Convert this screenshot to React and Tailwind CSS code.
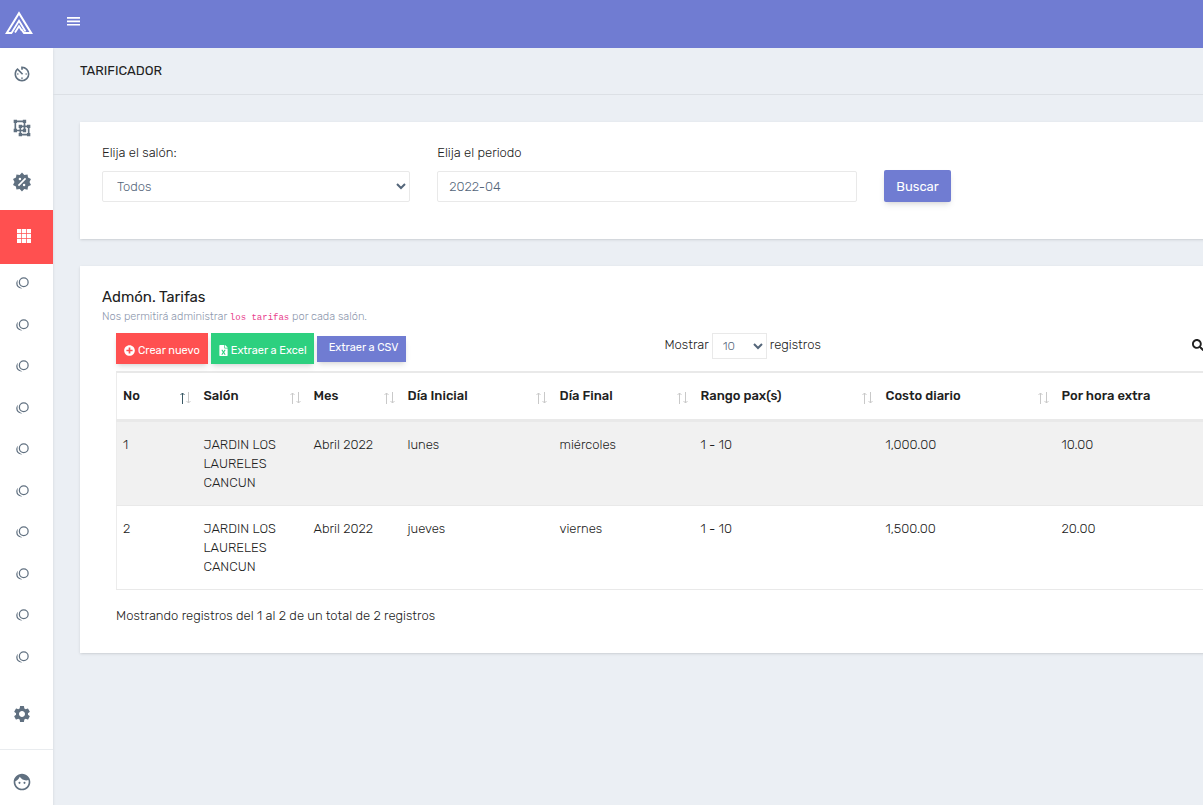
import React, { useState } from 'react';
import { MdAvTimer, MdFace, MdSettings } from 'react-icons/md';
import { FaFileExcel, FaPlusCircle, FaSearch } from 'react-icons/fa';

const rates = [
  { id: 1, room: 'JARDIN LOS LAURELES CANCUN', month: 'Abril 2022', from: 'lunes', to: 'miércoles', pax: '1 - 10', daily: '1,000.00', extra: '10.00' },
  { id: 2, room: 'JARDIN LOS LAURELES CANCUN', month: 'Abril 2022', from: 'jueves', to: 'viernes', pax: '1 - 10', daily: '1,500.00', extra: '20.00' },
];

const columns = [
  { label: 'No', width: 'w-[81px]' },
  { label: 'Salón', width: 'w-[110px]' },
  { label: 'Mes', width: 'w-[94px]' },
  { label: 'Día Inicial', width: 'w-[152px]' },
  { label: 'Día Final', width: 'w-[141px]' },
  { label: 'Rango pax(s)', width: 'w-[185px]' },
  { label: 'Costo diario', width: 'w-[176px]' },
  { label: 'Por hora extra', width: '' },
];

const submenu = ['Salones', 'Paquetes', 'Menús', 'Servicios', 'Clientes', 'Eventos', 'Periodos', 'Tarifas', 'Extras', 'Reportes'];

function Logo() {
  return (
    <svg viewBox="0 0 28 24" className="h-6 w-7" fill="none" stroke="#fff" strokeWidth="2">
      <path d="M7 22H1.8L14 2.2 26.2 22H19l-2.5-3.5" />
      <path d="M6.5 22 14 9.8 20.5 20.5" strokeWidth="1.8" />
      <path d="M10 21.5 14 15.2l2.8 4.3" strokeWidth="1.8" />
    </svg>
  );
}

function MenuIcon() {
  return (
    <svg viewBox="0 0 13 9" className="h-[9px] w-[13px]" fill="currentColor">
      <path d="M0 0h13v1.7H0zM0 3.4h13v1.8H0zM0 6.9h13v1.7H0z" />
    </svg>
  );
}

function UngroupIcon() {
  return (
    <svg viewBox="0 0 24 24" className="size-5" fill="currentColor">
      <path d="M2,2H6V3H13V2H17V6H16V9H18V8H22V12H21V18H22V22H18V21H12V22H8V18H9V16H6V17H2V13H3V6H2V2M18,12V11H16V13H17V17H13V16H11V18H12V19H18V18H19V12H18M13,6V5H6V6H5V13H6V14H9V12H8V8H12V9H14V6H13M12,12H11V14H13V13H14V11H12V12Z" />
    </svg>
  );
}

function SaleIcon() {
  return (
    <svg viewBox="0 0 24 24" className="size-5" fill="currentColor">
      <path d="M18.65,2.85L19.26,6.71L22.77,8.5L21,12L22.78,15.5L19.24,17.29L18.63,21.15L14.74,20.54L11.97,23.3L9.19,20.5L5.33,21.14L4.71,17.25L1.22,15.47L3,11.97L1.23,8.5L4.74,6.69L5.35,2.86L9.22,3.5L12,0.69L14.77,3.46L18.65,2.85M9.5,7A1.5,1.5 0 0,0 8,8.5A1.5,1.5 0 0,0 9.5,10A1.5,1.5 0 0,0 11,8.5A1.5,1.5 0 0,0 9.5,7M14.5,14A1.5,1.5 0 0,0 13,15.5A1.5,1.5 0 0,0 14.5,17A1.5,1.5 0 0,0 16,15.5A1.5,1.5 0 0,0 14.5,14M8.41,17L17,8.41L15.59,7L7,15.59L8.41,17Z" />
    </svg>
  );
}

function GridIcon() {
  return (
    <svg viewBox="0 0 14 14" className="size-3.5" fill="currentColor">
      <path d="M0 0h4.2v4.2H0zM4.9 0h4.2v4.2H4.9zM9.8 0H14v4.2H9.8zM0 4.9h4.2v4.2H0zM4.9 4.9h4.2v4.2H4.9zM9.8 4.9H14v4.2H9.8zM0 9.8h4.2V14H0zM4.9 9.8h4.2V14H4.9zM9.8 9.8H14V14H9.8z" />
    </svg>
  );
}

function CirclesIcon() {
  return (
    <svg viewBox="0 0 24 24" className="size-[15px]" fill="currentColor">
      <path d="M14,2A8,8 0 0,0 6,10A8,8 0 0,0 14,18A8,8 0 0,0 22,10A8,8 0 0,0 14,2M14,4A6,6 0 0,1 20,10A6,6 0 0,1 14,16A6,6 0 0,1 8,10A6,6 0 0,1 14,4M4.93,5.82C3.08,7.34 2,9.61 2,12A8,8 0 0,0 10,20C10.64,20 11.27,19.92 11.88,19.77C10.12,19.38 8.5,18.5 7.17,17.29C5.22,16.25 4,14.21 4,12C4,11.7 4.03,11.41 4.07,11.11C4.03,10.74 4,10.37 4,10C4,8.56 4.32,7.13 4.93,5.82Z" />
    </svg>
  );
}

function SortArrows({ active }) {
  return (
    <svg viewBox="0 0 12 12" className="h-3 w-3" fill="none" stroke="#c9c9c9">
      <path d="M2.5 1v11M.5 3l2-2 2 2" stroke={active ? '#3b5a66' : '#c9c9c9'} />
      <path d="M8.5 0v11M6.5 9l2 2 2-2" />
    </svg>
  );
}

function SideLink({ label, active, children }) {
  return (
    <a
      href="#"
      aria-label={label}
      className={`flex h-[54px] items-center pb-0.5 ${active ? 'bg-[#ff5050] pl-[17px] text-white' : 'pl-3 text-[#607080]'}`}
    >
      {children}
    </a>
  );
}

function Sidebar() {
  return (
    <nav className="w-[53px] shrink-0 bg-white shadow-sm">
      <SideLink label="Dashboard">
        <MdAvTimer className="size-5" />
      </SideLink>
      <SideLink label="Grupos">
        <UngroupIcon />
      </SideLink>
      <SideLink label="Promociones">
        <SaleIcon />
      </SideLink>
      <SideLink label="Catálogos" active>
        <GridIcon />
      </SideLink>
      <ul className="flex h-[424px] flex-col justify-between pt-3 pb-[23px] text-[#607080]">
        {submenu.map((item) => (
          <li key={item}>
            <a href="#" aria-label={item} className="block pl-[15px]">
              <CirclesIcon />
            </a>
          </li>
        ))}
      </ul>
      <SideLink label="Configuración">
        <MdSettings className="size-5" />
      </SideLink>
      <div className="mt-[7px] border-t border-[#e9ecef] pt-1.5">
        <SideLink label="Perfil">
          <MdFace className="size-5" />
        </SideLink>
      </div>
    </nav>
  );
}

function SearchCard() {
  const [period, setPeriod] = useState('2022-04');

  return (
    <section className="grid grid-cols-12 items-end gap-[27px] bg-white px-[22px] pt-[21px] pb-[37px] shadow-sm">
      <div className="col-span-3">
        <label htmlFor="salon" className="mb-[9px] block">
          Elija el salón:
        </label>
        <select id="salon" className="block h-[31px] w-full rounded-xs border border-[#e9e9e9] pl-2.5 text-[#54667a]">
          <option>Todos</option>
        </select>
      </div>
      <div className="col-span-4">
        <label htmlFor="periodo" className="mb-[9px] block">
          Elija el periodo
        </label>
        <input
          id="periodo"
          type="text"
          value={period}
          onChange={(e) => setPeriod(e.target.value)}
          className="block h-[31px] w-full rounded-xs border border-[#e9e9e9] px-[11px] text-[#54667a]"
        />
      </div>
      <div className="col-span-5">
        <button type="button" className="block h-8 rounded-xs bg-[#707cd2] px-3 font-normal text-white shadow-md">
          Buscar
        </button>
      </div>
    </section>
  );
}

function Toolbar() {
  return (
    <div className="grid grid-cols-[548fr_527fr_210fr] pt-[5px]">
      <div className="flex gap-[3px] text-[11px] font-normal text-white">
        <button type="button" className="flex h-[31px] items-center gap-[3px] bg-[#ff5050] px-2 pt-[3px] shadow-md">
          <FaPlusCircle className="size-[11px]" />
          Crear nuevo
        </button>
        <button type="button" className="flex h-[31px] items-center gap-0.5 bg-[#2dd07f] px-[7px] pt-[3px] shadow-md">
          <FaFileExcel className="size-[11px]" />
          Extraer a Excel
        </button>
        <button type="button" className="mt-[3px] h-[26px] bg-[#707cd2] pr-2 pb-1 pl-3 shadow-md">
          Extraer a CSV
        </button>
      </div>
      <div className="flex items-start gap-[3px]">
        <label htmlFor="longitud" className="leading-6">
          Mostrar
        </label>
        <select id="longitud" className="h-[26px] w-[55px] border border-[#e9e9e9] pl-1.5 text-xs text-[#54667a]">
          <option>10</option>
          <option>25</option>
          <option>50</option>
        </select>
        <span className="leading-6">registros</span>
      </div>
      <div className="flex items-start gap-2">
        <label htmlFor="buscar" className="pt-1.5">
          <FaSearch className="size-3" />
        </label>
        <input id="buscar" type="search" aria-label="Buscar" className="h-[26px] w-full border border-[#e9e9e9] px-2" />
      </div>
    </div>
  );
}

function RatesTable() {
  return (
    <table className="mt-[7px] w-full table-fixed border-collapse border border-[#ececec] text-left">
      <thead>
        <tr className="border-t-2 border-b-3 border-[#e9e9e9]">
          {columns.map((col, i) => (
            <th key={col.label} className={`h-12 px-1.5 font-medium ${col.width}`}>
              <div className="flex items-center justify-between">
                {col.label}
                <span className="pt-1">
                  <SortArrows active={i === 0} />
                </span>
              </div>
            </th>
          ))}
        </tr>
      </thead>
      <tbody>
        {rates.map((rate) => (
          <tr key={rate.id} className="border-b border-[#e9e9e9] align-top leading-[19px] odd:bg-[#f1f1f1]">
            <td className="px-1.5 py-[13px]">{rate.id}</td>
            <td className="px-1.5 py-[13px]">{rate.room}</td>
            <td className="px-1.5 py-[13px]">{rate.month}</td>
            <td className="px-1.5 py-[13px]">{rate.from}</td>
            <td className="px-1.5 py-[13px]">{rate.to}</td>
            <td className="px-1.5 py-[13px]">{rate.pax}</td>
            <td className="px-1.5 py-[13px]">{rate.daily}</td>
            <td className="px-1.5 py-[13px]">{rate.extra}</td>
          </tr>
        ))}
      </tbody>
    </table>
  );
}

export default function App() {
  return (
    <div className="flex min-h-screen flex-col overflow-hidden bg-[#ebeff4] font-[Rubik,Roboto,sans-serif] text-[13px] leading-[19px] font-light text-[#212121]">
      <header className="flex h-12 items-center bg-[#707cd2] text-white">
        <a href="#" aria-label="Inicio" className="flex h-full w-[53px] items-center pb-0.5 pl-[5px]">
          <Logo />
        </a>
        <button type="button" aria-label="Menú" className="pb-1.5 pl-3.5">
          <MenuIcon />
        </button>
      </header>
      <div className="flex grow">
        <Sidebar />
        <main className="min-w-[1412px] grow">
          <div className="border-b border-[#dce0e5] px-[27px] py-[13px]">
            <h1 className="leading-5 font-normal">TARIFICADOR</h1>
          </div>
          <div className="flex flex-col gap-[27px] px-[27px] pt-[27px]">
            <SearchCard />
            <section className="bg-white px-[22px] pt-[22px] pb-7 shadow-sm">
              <h2 className="text-[15px] font-normal">Admón. Tarifas</h2>
              <p className="text-[11px] leading-5 text-[#8d97ad]">
                Nos permitirá administrar{' '}
                <code className="font-['Liberation_Mono',monospace] text-[9px] text-[#e83e8c]">los tarifas</code> por cada salón.
              </p>
              <div className="px-3.5">
                <Toolbar />
                <RatesTable />
                <p className="mt-4">Mostrando registros del 1 al 2 de un total de 2 registros</p>
              </div>
            </section>
          </div>
        </main>
      </div>
    </div>
  );
}
